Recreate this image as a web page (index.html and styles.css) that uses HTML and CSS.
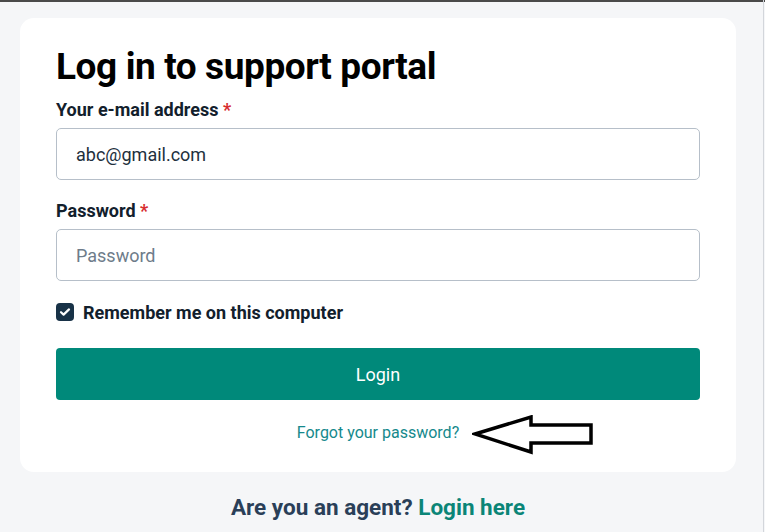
FILE: index.html
```html
<!DOCTYPE html>
<html>
<head>
<meta charset="utf-8">
<link rel="stylesheet" href="styles.css">
</head>
<body>
<div class="topline"></div>
<main class="page">
  <section class="card">
    <h1 class="title">Log in to support portal</h1>
    <form class="form">
      <label class="label">Your e-mail address <span class="req">*</span></label>
      <div class="input"><span class="value">abc@gmail.com</span></div>
      <label class="label label-pw">Password <span class="req">*</span></label>
      <div class="input"><span class="placeholder">Password</span></div>
      <div class="remember">
        <span class="checkbox">
          <svg width="12" height="10" viewBox="0 0 12 10"><path d="M2 5.2 L4.6 7.6 L10 2.4" fill="none" stroke="#fff" stroke-width="2.2" stroke-linecap="round" stroke-linejoin="round"/></svg>
        </span>
        <span class="remember-text">Remember me on this computer</span>
      </div>
      <div class="button">Login</div>
      <div class="forgot-row">
        <a class="forgot">Forgot your password?</a>
        <svg class="arrow" width="124" height="40" viewBox="0 0 124 40"><path d="M3 19 L59 2 L59 10 L119 10 L119 28 L59 28 L59 37 Z" fill="none" stroke="#000" stroke-width="3.5" stroke-linejoin="miter"/></svg>
      </div>
    </form>
  </section>
  <p class="agent">Are you an agent? <a class="agent-link">Login here</a></p>
</main>
<div class="edge"></div>
</body>
</html>
```
FILE: styles.css
```css
html, body {
  margin: 0;
  padding: 0;
  background: #f5f6f8;
  font-family: Roboto, "Liberation Sans", sans-serif;
  height: 532px;
  overflow: hidden;
}
.topline {
  height: 2px;
  background: #4a4a4a;
}
.edge {
  position: absolute;
  top: 0;
  right: 1px;
  width: 1px;
  height: 532px;
  background: #d3d6db;
}
.page {
  width: 716px;
  margin: 16px 0 0 20px;
}
.card {
  background: #fff;
  border-radius: 14px;
  padding: 27px 36px 29px 36px;
}
.title {
  margin: 0;
  font-size: 37px;
  font-weight: 700;
  color: #000;
  line-height: 44px;
  letter-spacing: -0.4px;
}
.form {
  display: flex;
  flex-direction: column;
}
.label {
  font-size: 18px;
  font-weight: 700;
  color: #12202c;
  line-height: 21px;
  margin-top: 10px;
}
.label-pw {
  margin-top: 20px;
}
.req {
  color: #d72d30;
}
.input {
  margin-top: 8px;
  height: 50px;
  border: 1px solid #b6bfc9;
  border-radius: 5px;
  display: flex;
  align-items: center;
  padding-left: 19px;
  font-size: 18px;
}
.value {
  color: #22303d;
}
.placeholder {
  color: #6e7c8a;
}
.remember {
  margin-top: 21px;
  display: flex;
  align-items: center;
  gap: 9px;
  height: 20px;
}
.checkbox {
  width: 18px;
  height: 18px;
  border-radius: 4px;
  background: #183247;
  display: flex;
  align-items: center;
  justify-content: center;
}
.remember-text {
  font-size: 18px;
  font-weight: 700;
  color: #12202c;
}
.button {
  margin-top: 26px;
  height: 52px;
  border-radius: 4px;
  background: #00897a;
  color: #fff;
  font-size: 18px;
  display: flex;
  align-items: center;
  justify-content: center;
}
.forgot-row {
  position: relative;
  margin-top: 23px;
  text-align: center;
  height: 20px;
}
.forgot {
  font-size: 16px;
  color: #15898c;
  line-height: 20px;
}
.arrow {
  position: absolute;
  left: 416px;
  top: -8px;
}
.agent {
  margin: 22px 0 0 0;
  text-align: center;
  font-size: 22.5px;
  line-height: 26px;
  font-weight: 700;
  color: #2a3f58;
}
.agent-link {
  color: #0b8577;
}
```
